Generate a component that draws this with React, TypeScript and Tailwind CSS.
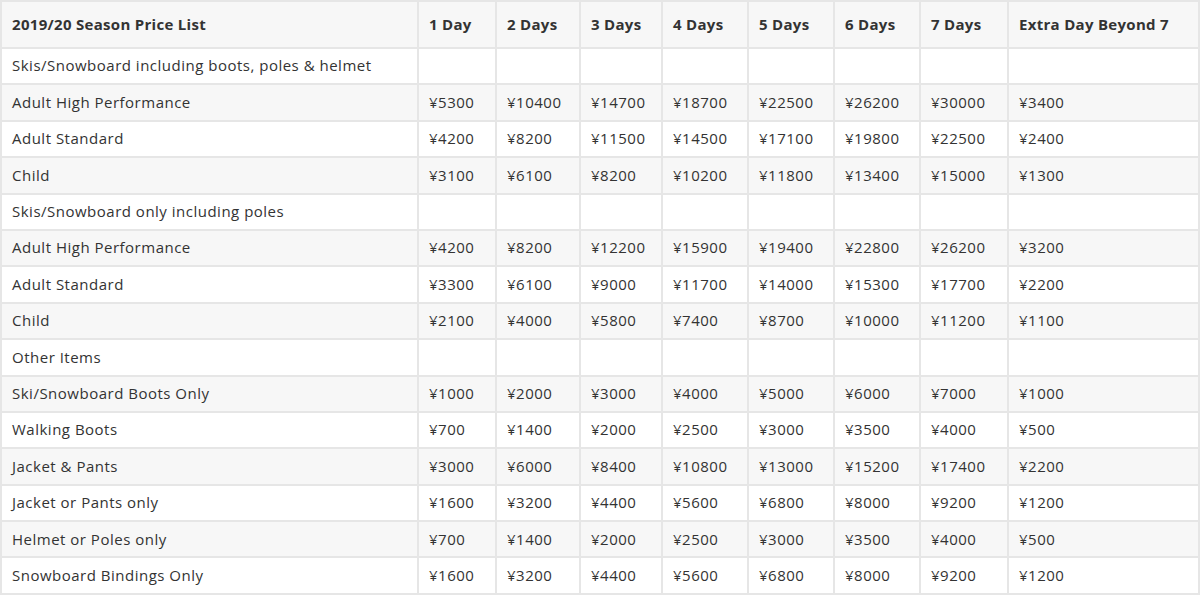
import React from 'react';

const headers = ['2019/20 Season Price List', '1 Day', '2 Days', '3 Days', '4 Days', '5 Days', '6 Days', '7 Days', 'Extra Day Beyond 7'];
const widths = ['w-[417px]', 'w-[78px]', 'w-[84px]', 'w-[82px]', 'w-[86px]', 'w-[86px]', 'w-[86px]', 'w-[88px]', 'w-[191px]'];

const rows: [string, ...number[]][] = [
  ['Skis/Snowboard including boots, poles & helmet'],
  ['Adult High Performance', 5300, 10400, 14700, 18700, 22500, 26200, 30000, 3400],
  ['Adult Standard', 4200, 8200, 11500, 14500, 17100, 19800, 22500, 2400],
  ['Child', 3100, 6100, 8200, 10200, 11800, 13400, 15000, 1300],
  ['Skis/Snowboard only including poles'],
  ['Adult High Performance', 4200, 8200, 12200, 15900, 19400, 22800, 26200, 3200],
  ['Adult Standard', 3300, 6100, 9000, 11700, 14000, 15300, 17700, 2200],
  ['Child', 2100, 4000, 5800, 7400, 8700, 10000, 11200, 1100],
  ['Other Items'],
  ['Ski/Snowboard Boots Only', 1000, 2000, 3000, 4000, 5000, 6000, 7000, 1000],
  ['Walking Boots', 700, 1400, 2000, 2500, 3000, 3500, 4000, 500],
  ['Jacket & Pants', 3000, 6000, 8400, 10800, 13000, 15200, 17400, 2200],
  ['Jacket or Pants only', 1600, 3200, 4400, 5600, 6800, 8000, 9200, 1200],
  ['Helmet or Poles only', 700, 1400, 2000, 2500, 3000, 3500, 4000, 500],
  ['Snowboard Bindings Only', 1600, 3200, 4400, 5600, 6800, 8000, 9200, 1200],
];

export default function App() {
  return (
    <div className="w-[1200px] h-[595px] bg-white text-[#333] font-['Open_Sans',sans-serif]">
      <table className="table-fixed border-collapse w-[1199px] text-[15px]">
        <thead>
          <tr className="h-[47px] bg-[#f7f7f7]">
            {headers.map((h, i) => (
              <th key={h} className={`${widths[i]} border-2 border-[#e6e6e6] px-[10px] pb-[1px] text-left font-bold tracking-[0.3px]`}>
                {h}
              </th>
            ))}
          </tr>
        </thead>
        <tbody>
          {rows.map((r, ri) => (
            <tr key={ri} className={`h-[36.4px] ${ri % 2 === 1 ? 'bg-[#f7f7f7]' : 'bg-white'}`}>
              {Array.from({ length: 9 }).map((_, ci) => (
                <td key={ci} className="border-2 border-[#e6e6e6] px-[10px] pb-[1px] text-left whitespace-nowrap tracking-[0.5px]">
                  {ci === 0 ? r[0] : r[ci] !== undefined ? `¥${r[ci]}` : ''}
                </td>
              ))}
            </tr>
          ))}
        </tbody>
      </table>
    </div>
  );
}
